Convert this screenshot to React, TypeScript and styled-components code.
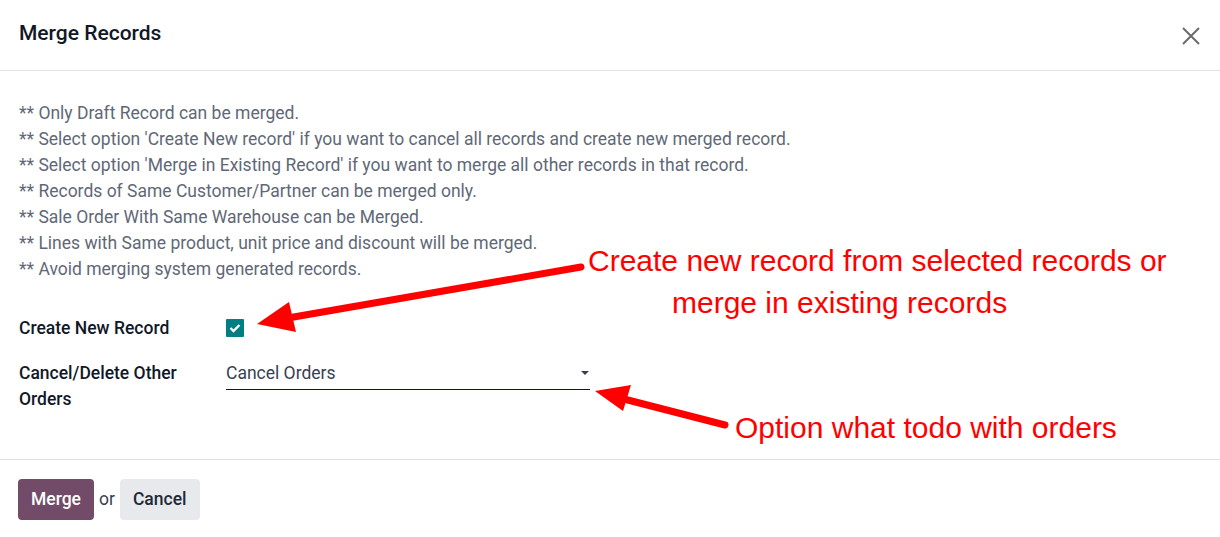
import React from "react";
import styled, { createGlobalStyle } from "styled-components";

const Global = createGlobalStyle`
  html, body { margin: 0; padding: 0; background: #fff; }
  body { font-family: Roboto, "Noto Sans", sans-serif; }
  * { box-sizing: border-box; }
`;

const Modal = styled.div`
  position: relative;
  width: 1220px;
  height: 537px;
  display: flex;
  flex-direction: column;
  background: #fff;
  overflow: hidden;
`;

const Header = styled.header`
  height: 71px;
  flex: none;
  display: flex;
  align-items: center;
  justify-content: space-between;
  padding: 0 18px 4px 19px;
  border-bottom: 1px solid #dee2e6;
`;

const Title = styled.h4`
  margin: 0;
  font-size: 21px;
  font-weight: 500;
  color: #111827;
`;

const Close = styled.button`
  border: none;
  background: none;
  padding: 0;
  width: 22px;
  height: 22px;
  display: flex;
  align-items: center;
  justify-content: center;
  margin-top: 6px;
`;

const Body = styled.main`
  flex: 1;
  padding: 29px 19px 0 19px;
  border-bottom: 1px solid #dee2e6;
`;

const Notes = styled.div`
  font-size: 17.5px;
  line-height: 26px;
  color: #5f6877;
`;

const Form = styled.div`
  margin-top: 29px;
  display: grid;
  grid-template-columns: 207px 364px;
  row-gap: 15px;
  align-items: start;
`;

const Label = styled.div`
  font-size: 17.5px;
  font-weight: 500;
  line-height: 26px;
  color: #111827;
  width: 180px;
  padding-top: 4px;
`;

const CheckCell = styled.div`
  padding-top: 8px;
`;

const Check = styled.span`
  width: 18px;
  height: 18px;
  display: flex;
  align-items: center;
  justify-content: center;
  background: #017e84;
  border-radius: 1px;
`;

const Select = styled.div`
  display: flex;
  align-items: center;
  justify-content: space-between;
  height: 34px;
  border-bottom: 1px solid #111827;
  font-size: 17.5px;
  color: #374151;
  padding: 0;
`;

const Caret = styled.span`
  width: 0;
  height: 0;
  border-left: 4px solid transparent;
  border-right: 4px solid transparent;
  border-top: 4px solid #374151;
  margin-right: 1px;
`;

const Footer = styled.footer`
  height: 77px;
  flex: none;
  display: flex;
  align-items: flex-start;
  gap: 5px;
  padding: 19px 18px;
`;

const Btn = styled.button<{ $primary?: boolean }>`
  height: 41px;
  padding: 0 13px 1px;
  border: none;
  border-radius: 4px;
  font-family: Roboto, "Noto Sans", sans-serif;
  font-size: 17.5px;
  font-weight: 500;
  background: ${(p) => (p.$primary ? "#714b67" : "#e7e9ed")};
  color: ${(p) => (p.$primary ? "#ffffff" : "#1f2937")};
`;

const Or = styled.span`
  font-size: 17.5px;
  line-height: 40px;
  color: #374151;
`;

const Overlay = styled.svg`
  position: absolute;
  left: 0;
  top: 0;
  pointer-events: none;
`;

const Note = styled.span<{ $x: number; $y: number }>`
  position: absolute;
  left: ${(p) => p.$x}px;
  top: ${(p) => p.$y}px;
  font-family: "Liberation Sans", Arial, sans-serif;
  font-size: 30px;
  line-height: 30px;
  color: #ff0000;
  white-space: nowrap;
`;

const notes = [
  "** Only Draft Record can be merged.",
  "** Select option 'Create New record' if you want to cancel all records and create new merged record.",
  "** Select option 'Merge in Existing Record' if you want to merge all other records in that record.",
  "** Records of Same Customer/Partner can be merged only.",
  "** Sale Order With Same Warehouse can be Merged.",
  "** Lines with Same product, unit price and discount will be merged.",
  "** Avoid merging system generated records.",
];

export default function App() {
  return (
    <Modal>
      <Global />
      <Header>
        <Title>Merge Records</Title>
        <Close aria-label="Close">
          <svg width="20" height="20" viewBox="0 0 20 20">
            <path d="M2 2 L18 18 M18 2 L2 18" stroke="#6b6b6b" strokeWidth="2" />
          </svg>
        </Close>
      </Header>
      <Body>
        <Notes>
          {notes.map((n) => (
            <div key={n}>{n}</div>
          ))}
        </Notes>
        <Form>
          <Label>Create New Record</Label>
          <CheckCell>
            <Check>
              <svg width="12" height="10" viewBox="0 0 12 10">
                <path d="M1.5 5 L4.5 8 L10.5 2" stroke="#fff" strokeWidth="2.4" fill="none" />
              </svg>
            </Check>
          </CheckCell>
          <Label>Cancel/Delete Other Orders</Label>
          <Select>
            <span>Cancel Orders</span>
            <Caret />
          </Select>
        </Form>
      </Body>
      <Footer>
        <Btn $primary>Merge</Btn>
        <Or>or</Or>
        <Btn>Cancel</Btn>
      </Footer>

      <Overlay width="1220" height="537" viewBox="0 0 1220 537">
        <line x1="581" y1="267" x2="288" y2="318" stroke="#ff0000" strokeWidth="7" strokeLinecap="round" />
        <polygon points="257,324 289,302 296,332" fill="#ff0000" />
        <line x1="725" y1="425" x2="620" y2="398" stroke="#ff0000" strokeWidth="7" strokeLinecap="round" />
        <polygon points="595,391 631,385 623,411" fill="#ff0000" />
      </Overlay>
      <Note $x={588} $y={246}>Create new record from selected records or</Note>
      <Note $x={672} $y={288}>merge in existing records</Note>
      <Note $x={735} $y={413}>Option what todo with orders</Note>
    </Modal>
  );
}
